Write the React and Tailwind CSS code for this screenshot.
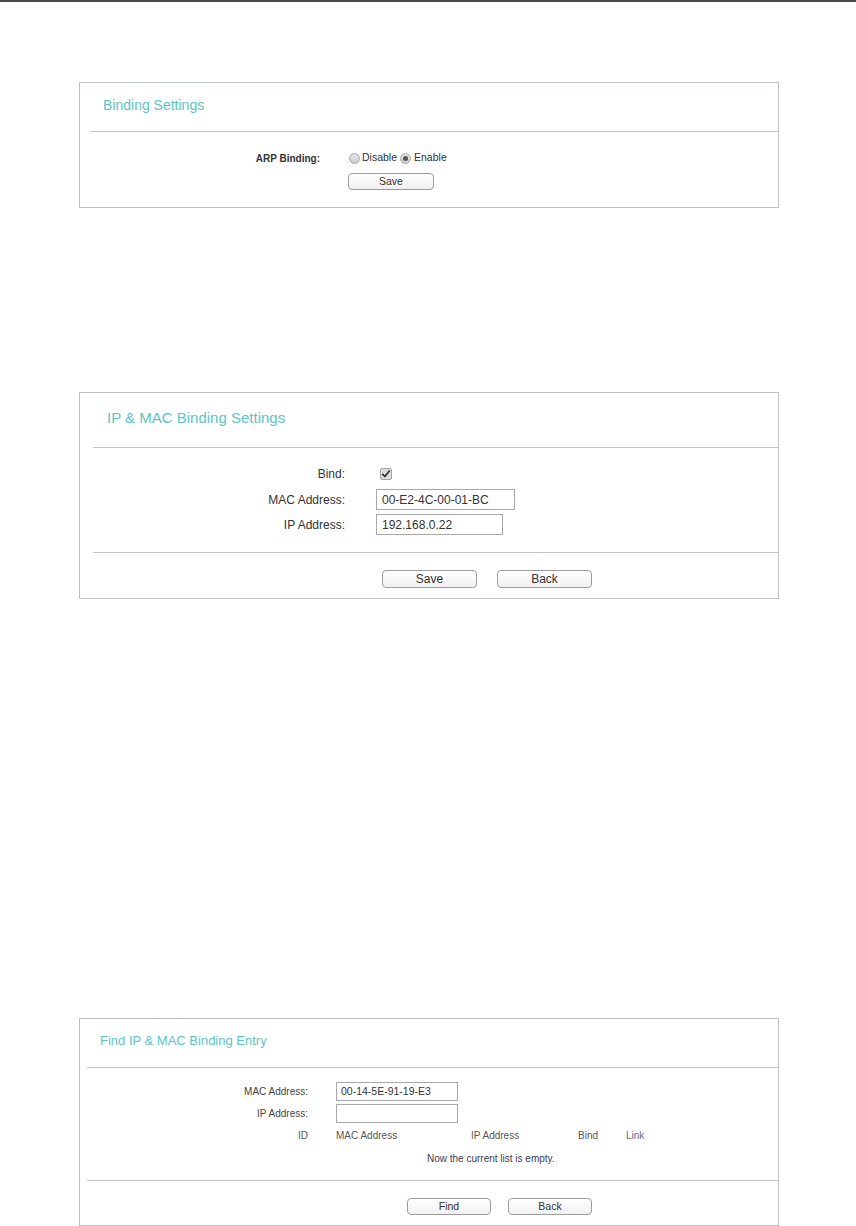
const font = { fontFamily: '"Liberation Sans", Arial, sans-serif' }

function Btn({ children, className }) {
  return (
    <button
      className={`flex items-center justify-center rounded-[4px] border border-[#9c9c9c] bg-gradient-to-b from-white to-[#f1f1f1] text-[#333] leading-none ${className}`}
    >
      {children}
    </button>
  )
}

function Radio({ checked }) {
  return (
    <span className="inline-flex h-[11px] w-[11px] items-center justify-center rounded-full border border-[#a8a8a8] bg-gradient-to-b from-[#e4e4e4] to-[#cfcfcf]">
      {checked && <span className="h-[5px] w-[5px] rounded-full bg-[#555]" />}
    </span>
  )
}

function CheckBox() {
  return (
    <span className="flex h-[12px] w-[12px] items-center justify-center rounded-[2px] border border-[#a5a5a5] bg-[#dcdcdc]">
      <svg viewBox="0 0 12 12" className="h-[10px] w-[10px]">
        <path d="M2 6.5 L4.6 9 L10 2.5" fill="none" stroke="#2b2b2b" strokeWidth="2" strokeLinecap="round" strokeLinejoin="round" />
      </svg>
    </span>
  )
}

function Divider({ indent }) {
  return <div className={`h-px bg-[#c6c6c6] ${indent}`} />
}

export default function App() {
  return (
    <div className="w-[856px] bg-white text-[#333]" style={font}>
      <div className="h-[2px] bg-[#4a4a4a]" />

      {/* Binding Settings */}
      <div className="ml-[79px] mt-[80px] h-[126px] w-[700px] border border-[#c0c0c0] border-t-[#c2c6d2]">
        <div className="h-[48px] pl-[23px] pt-[15px] text-[14px] leading-[14px] text-[#5cc4c4]">Binding Settings</div>
        <Divider indent="ml-[10px]" />
        <div className="mt-[19px] flex h-[14px] items-center">
          <div className="w-[240px] text-right text-[10px] font-bold">ARP Binding:</div>
          <div className="ml-[29px] flex items-center text-[10.5px]">
            <Radio />
            <span className="ml-[2px] mr-[3px]">Disable</span>
            <Radio checked />
            <span className="ml-[3px]">Enable</span>
          </div>
        </div>
        <div className="mt-[8px] flex">
          <Btn className="ml-[268px] h-[17px] w-[86px] text-[10.5px]">Save</Btn>
        </div>
      </div>

      {/* IP & MAC Binding Settings */}
      <div className="ml-[79px] mt-[184px] h-[207px] w-[700px] border border-[#c0c0c0]">
        <div className="h-[54px] pl-[27px] pt-[16px] text-[15px] leading-[18px] text-[#5cc4c4]">IP &amp; MAC Binding Settings</div>
        <Divider indent="ml-[13px]" />
        <div className="mt-[20px] flex h-[12px] items-center text-[12px]">
          <div className="w-[265px] text-right">Bind:</div>
          <div className="ml-[35px]">
            <CheckBox />
          </div>
        </div>
        <div className="mt-[9px] flex h-[21px] items-center text-[12px]">
          <div className="w-[265px] text-right">MAC Address:</div>
          <div className="ml-[31px] flex h-[21px] w-[139px] items-center border border-[#a8a8a8] pl-[5px]">00-E2-4C-00-01-BC</div>
        </div>
        <div className="mt-[4px] flex h-[21px] items-center text-[12px]">
          <div className="w-[265px] text-right">IP Address:</div>
          <div className="ml-[31px] flex h-[21px] w-[127px] items-center border border-[#a8a8a8] pl-[5px]">192.168.0.22</div>
        </div>
        <div className="mt-[17px]">
          <Divider indent="ml-[13px]" />
        </div>
        <div className="mt-[17px] flex gap-[20px] pl-[302px]">
          <Btn className="h-[18px] w-[95px] text-[12px]">Save</Btn>
          <Btn className="h-[18px] w-[95px] text-[12px]">Back</Btn>
        </div>
      </div>

      {/* Find IP & MAC Binding Entry */}
      <div className="ml-[79px] mt-[419px] h-[208px] w-[700px] border border-[#c0c0c0]">
        <div className="h-[48px] pl-[20px] pt-[14px] text-[13px] leading-[16px] text-[#5cc4c4]">Find IP &amp; MAC Binding Entry</div>
        <Divider indent="ml-[7px]" />
        <div className="mt-[14px] flex h-[19px] items-center text-[10px] text-[#444]">
          <div className="w-[228px] text-right">MAC Address:</div>
          <div className="ml-[28px] flex h-[19px] w-[122px] items-center border border-[#a8a8a8] pl-[4px] text-[10.5px] text-[#333]">00-14-5E-91-19-E3</div>
        </div>
        <div className="mt-[3px] flex h-[19px] items-center text-[10px] text-[#444]">
          <div className="w-[228px] text-right">IP Address:</div>
          <div className="ml-[28px] h-[19px] w-[122px] border border-[#a8a8a8]" />
        </div>
        <div className="mt-[5px] flex h-[14px] items-center text-[10px] text-[#555]">
          <div className="w-[228px] text-right">ID</div>
          <div className="ml-[28px] w-[135px]">MAC Address</div>
          <div className="w-[107px]">IP Address</div>
          <div className="w-[48px]">Bind</div>
          <div className="text-[#6a6584]">Link</div>
        </div>
        <div className="mt-[9px] flex h-[14px] items-center text-[10px] text-[#3e3a52]">
          <div className="ml-[347px]">Now the current list is empty.</div>
        </div>
        <div className="mt-[15px]">
          <Divider indent="ml-[7px]" />
        </div>
        <div className="mt-[17px] flex gap-[17px] pl-[327px]">
          <Btn className="h-[17px] w-[84px] text-[10.5px]">Find</Btn>
          <Btn className="h-[17px] w-[84px] text-[10.5px]">Back</Btn>
        </div>
      </div>
    </div>
  )
}
